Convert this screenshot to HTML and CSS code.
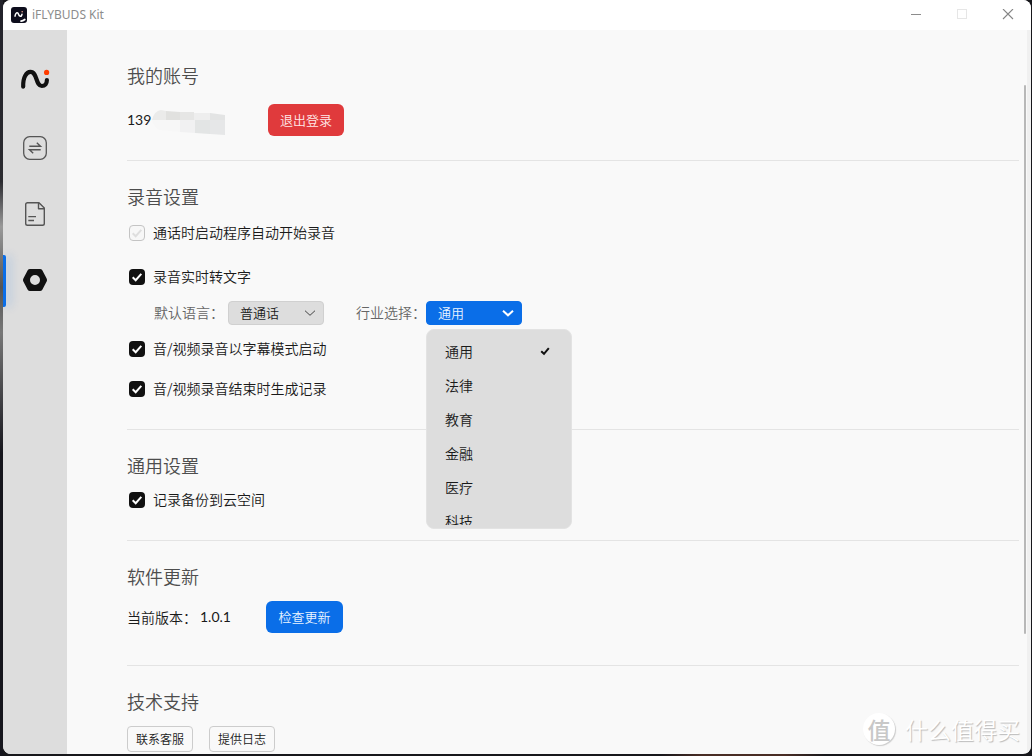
FILE: index.html
```html
<!DOCTYPE html>
<html lang="zh-CN">
<head>
<meta charset="utf-8">
<meta name="viewport" content="width=device-width, initial-scale=1">
<title>iFLYBUDS Kit</title>
<link rel="stylesheet" href="styles.css">
</head>
<body class="desktop">
<div class="window">
  <header class="titlebar">
    <svg class="app-icon" viewBox="0 0 16 16" aria-hidden="true">
      <rect width="16" height="16" rx="3" fill="#0d0d1c"/>
      <path d="M4 9.2C4.5 5.5 6.5 4.6 7.4 7C8.200 9.500 10.500 10.500 11 7.200" fill="none" stroke="#fff" stroke-width="1.500" stroke-linecap="round"/>
      <circle cx="11.200" cy="4.800" r="0.800" fill="#e8a090"/>
      <path d="M10 14.200Q12 14 13.800 12.500" fill="none" stroke="#fff" stroke-width="1.700" stroke-linecap="round"/>
    </svg>
    <h1 class="app-name">iFLYBUDS Kit</h1>
    <div class="window-controls">
      <button class="control" aria-label="最小化"><svg viewBox="0 0 12 12"><path d="M1 5.500H11" stroke="#8c8c8c"/></svg></button>
      <button class="control" aria-label="最大化" disabled><svg viewBox="0 0 12 12"><rect x="1.500" y="0.500" width="9" height="9" fill="none" stroke="#e6e6e6"/></svg></button>
      <button class="control" aria-label="关闭"><svg viewBox="0 0 12 12"><path d="M1 0L11 10M11 0L1 10" stroke="#858585" stroke-width="1.100"/></svg></button>
    </div>
  </header>
  <div class="body">
    <nav class="sidebar" aria-label="主导航">
      <svg class="logo" viewBox="20 64 30 30" aria-hidden="true">
        <path d="M23.200 86.700C22.800 77 26.500 71.900 30.400 71.900C37.500 71.900 35.500 86 41.800 86C45 86 46.900 83.500 46.900 80" fill="none" stroke="#111" stroke-width="4.200" stroke-linecap="round"/>
        <circle cx="46.600" cy="72.400" r="2.600" fill="#ff3d00"/>
      </svg>
      <button class="nav-item" aria-label="传输">
        <svg viewBox="0 0 24 24" fill="none" stroke="#555" stroke-width="1.300"><rect x="0.700" y="0.700" width="22.600" height="22.600" rx="6"/><path d="M6.300 10.200H17.500L13.800 6.800M17.700 13.800H6.500L10.200 17.200" stroke-width="1.400"/></svg>
      </button>
      <button class="nav-item" aria-label="记录">
        <svg viewBox="0 0 24 24" fill="none" stroke="#555" stroke-width="1.400" stroke-linejoin="round"><path d="M4 0.700H16L21.300 6V21.500Q21.300 23.300 19.500 23.300H4.500Q2.700 23.300 2.700 21.500V2.500Q2.700 0.700 4.500 0.700M15.500 0.700V6.800H21.300"/><path d="M5.300 14.600H13M5.300 18.500H11"/></svg>
      </button>
      <button class="nav-item active" aria-label="设置" aria-current="page">
        <svg viewBox="0 0 24 24"><path fill="#111" fill-rule="evenodd" d="M7 1H17Q18.500 1 19.300 2.300L23.500 10.200Q24.500 12 23.500 13.800L19.300 21.700Q18.500 23 17 23H7Q5.500 23 4.700 21.700L0.500 13.800Q-0.500 12 0.500 10.200L4.700 2.300Q5.500 1 7 1ZM12 7A5 5 0 1 0 12 17A5 5 0 1 0 12 7Z"/></svg>
      </button>
    </nav>
    <main class="content">
      <section class="section account">
        <h2 class="heading">我的账号</h2>
        <div class="row account-row">
          <span class="phone"><span class="digits">139</span><svg class="mask" viewBox="0 0 74 26" aria-hidden="true"><path d="M0 10Q2 1 9 0L14 1V10Z" fill="#ebebea"/><path d="M14 1L28 2V10H14Z" fill="#e1e1df"/><path d="M28 2H42V10H28Z" fill="#e6e6e5"/><path d="M42 3H58V10H42Z" fill="#eee"/><path d="M58 3L73 5V10H58Z" fill="#e3e4e4"/><path d="M0 10H28V22L8 20Q2 18 0 10Z" fill="#f7f7f7"/><path d="M28 10H43V23L28 22Z" fill="#f1f1f2"/><path d="M43 10H58V24L43 23Z" fill="#e3e5e5"/><path d="M58 10H73V25L58 24Z" fill="#e6e7e8"/></svg></span>
          <button class="button danger">退出登录</button>
        </div>
      </section>

      <section class="section recording">
        <h2 class="heading">录音设置</h2>
        <label class="check"><input type="checkbox" checked disabled><svg viewBox="0 0 16 16"><path d="M3.700 8.200L6.700 11.200L12.300 4.900"/></svg><span>通话时启动程序自动开始录音</span></label>
        <label class="check spaced-wide"><input type="checkbox" checked><svg viewBox="0 0 16 16"><path d="M3.700 8.200L6.700 11.200L12.300 4.900"/></svg><span>录音实时转文字</span></label>
        <div class="row options">
          <div class="field">
            <label for="language">默认语言：</label>
            <span class="select-box">
              <select class="select" id="language"><option>普通话</option></select>
              <svg class="chevron" viewBox="0 0 12 12"><path d="M1 3.700L6 8.300L11 3.700"/></svg>
            </span>
          </div>
          <div class="field">
            <label for="industry">行业选择：</label>
            <span class="select-box open">
              <select class="select" id="industry"><option>通用</option><option>法律</option><option>教育</option><option>金融</option><option>医疗</option><option>科技</option></select>
              <svg class="chevron" viewBox="0 0 12 12"><path d="M1 3.700L6 8.300L11 3.700"/></svg>
              <span class="menu"><span class="menu-list" role="listbox" aria-label="行业选择">
                <span class="menu-item" role="option" aria-selected="true">通用<svg class="tick" viewBox="0 0 10 10"><path d="M1.200 5.200L4 7.800L8.800 2.200"/></svg></span>
                <span class="menu-item" role="option">法律</span>
                <span class="menu-item" role="option">教育</span>
                <span class="menu-item" role="option">金融</span>
                <span class="menu-item" role="option">医疗</span>
                <span class="menu-item" role="option">科技</span>
              </span></span>
            </span>
          </div>
        </div>
        <label class="check"><input type="checkbox" checked><svg viewBox="0 0 16 16"><path d="M3.700 8.200L6.700 11.200L12.300 4.900"/></svg><span>音/视频录音以字幕模式启动</span></label>
        <label class="check spaced"><input type="checkbox" checked><svg viewBox="0 0 16 16"><path d="M3.700 8.200L6.700 11.200L12.300 4.900"/></svg><span>音/视频录音结束时生成记录</span></label>
      </section>

      <section class="section general">
        <h2 class="heading">通用设置</h2>
        <label class="check"><input type="checkbox" checked><svg viewBox="0 0 16 16"><path d="M3.700 8.200L6.700 11.200L12.300 4.900"/></svg><span>记录备份到云空间</span></label>
      </section>

      <section class="section update">
        <h2 class="heading">软件更新</h2>
        <div class="row version-row">
          <span class="version-label">当前版本：</span><span class="version digits">1.0.1</span>
          <button class="button primary">检查更新</button>
        </div>
      </section>

      <section class="section support">
        <h2 class="heading">技术支持</h2>
        <div class="row support-row">
          <button class="button outline">联系客服</button>
          <button class="button outline">提供日志</button>
        </div>
      </section>
    </main>
    <div class="scroll-track" aria-hidden="true"><div class="scroll-thumb"></div></div>
  </div>
</div>
<div class="watermark"><span class="watermark-badge">值</span><span>什么值得买</span></div>
</body>
</html>
```

FILE: styles.css
```css
* {
  box-sizing: border-box;
}

.desktop {
  height: 100vh;
  margin: 0;
  padding: 0 1px 2px 3px;
  overflow: hidden;
  background:
    linear-gradient(#22222a 0%, #2b2b30 24%, #999 30%, #555 38%, #777 44%, #15151c 60%) left / 3px 100% no-repeat,
    linear-gradient(90deg, #17171b 0%, #17171b 64%, #4a2d25 68%, #4a2d25 76%, #17171b 80%);
  color: #1a1a1a;
  font-family: "Noto Sans CJK SC", sans-serif;
  font-size: 14px;
  font-weight: 350;
  line-height: 24px;
}

button,
select,
input {
  margin: 0;
  padding: 0;
  border: 0;
  background: none;
  color: inherit;
  font: inherit;
}

svg {
  display: block;
}

.window {
  display: flex;
  flex-direction: column;
  height: 100%;
  overflow: hidden;
  border-radius: 8px;
  background: #f9f9f9;
}

.titlebar {
  display: flex;
  flex: none;
  align-items: center;
  height: 30px;
  padding-left: 8px;
  background: #fff;
}

.app-icon {
  width: 16px;
  height: 16px;
}

.app-name {
  margin: 0 auto 0 5px;
  color: #8c8c8c;
  font-family: "Noto Sans", sans-serif;
  font-size: 12px;
  font-weight: 400;
}

.window-controls {
  display: flex;
}

.control {
  display: grid;
  place-items: center;
  width: 46px;
  height: 30px;
}

.control svg {
  width: 12px;
  height: 12px;
}

.body {
  display: flex;
  flex: 1;
  min-height: 0;
}

.sidebar {
  display: flex;
  flex: none;
  flex-direction: column;
  align-items: center;
  gap: 42px;
  width: 64px;
  padding-top: 34px;
  background: #ddd;
}

.logo {
  width: 30px;
  height: 30px;
}

.nav-item {
  position: relative;
  display: grid;
  place-items: center;
  width: 100%;
  height: 24px;
}

.nav-item svg {
  width: 24px;
  height: 24px;
}

.nav-item.active::before {
  content: "";
  position: absolute;
  top: -13px;
  left: 0;
  width: 3px;
  height: 52px;
  border-radius: 0 2px 2px 0;
  background: #0a6ee8;
  box-shadow: 4px 0 10px rgba(10, 110, 232, 0.3);
}

.content {
  flex: 1;
  min-width: 0;
  padding: 10px 5px 0 60px;
  overflow: hidden;
}

.section {
  padding-top: 24px;
  border-bottom: 1px solid #e4e4e4;
}

.account {
  padding-bottom: 24px;
}

.recording,
.general {
  padding-bottom: 28px;
}

.update {
  padding-bottom: 32px;
}

.support {
  border-bottom: 0;
}

.heading {
  margin: 0 0 14px;
  color: #4d4d4d;
  font-size: 18px;
  font-weight: 350;
  line-height: 22px;
}

.account .heading {
  margin-bottom: 18px;
}

.general .heading {
  margin-bottom: 12px;
}

.row {
  display: flex;
  align-items: center;
}

.digits {
  font-family: Lato, sans-serif;
  font-weight: 400;
}

.phone {
  display: flex;
  align-items: center;
  width: 141px;
}

.mask {
  width: 74px;
  height: 26px;
  margin: 5px 0 0 1px;
}

.button {
  height: 32px;
  border-radius: 6px;
  font-size: 13px;
  line-height: 20px;
}

.danger {
  width: 76px;
  background: #e03a3c;
  color: #ffe9e9;
}

.primary {
  width: 77px;
  background: #0a6ee8;
  color: #e9f3ff;
}

.outline {
  width: 66px;
  height: 26px;
  border: 1px solid #ccc;
  border-radius: 4px;
  font-size: 12px;
}

.check {
  display: grid;
  grid-template-columns: 16px auto;
  align-items: center;
  justify-content: start;
  column-gap: 8px;
  padding-left: 2px;
}

.check span {
  padding-bottom: 2px;
  line-height: 22px;
}

.check input {
  grid-area: 1 / 1;
  width: 16px;
  height: 16px;
  border-radius: 4px;
  background: #111;
  appearance: none;
}

.check svg {
  grid-area: 1 / 1;
  width: 16px;
  height: 16px;
  fill: none;
  stroke: #fff;
  stroke-width: 2;
  pointer-events: none;
}

.check input:disabled {
  border: 1px solid #c4c4c4;
  background: #f7f7f7;
}

.check input:disabled + svg {
  stroke: #dedede;
}

.spaced {
  margin-top: 16px;
}

.spaced-wide {
  margin-top: 20px;
}

.options {
  gap: 32px;
  padding: 12px 0 12px 27px;
}

.field {
  display: flex;
  align-items: center;
  color: #666;
}

.field > label {
  width: 74px;
  padding-bottom: 2px;
  line-height: 22px;
  white-space: nowrap;
}

.field + .field > label {
  width: 70px;
}

.select-box {
  position: relative;
  display: grid;
  align-items: center;
  width: 96px;
  height: 24px;
}

.select {
  grid-area: 1 / 1;
  width: 100%;
  height: 24px;
  padding-left: 11px;
  border: 1px solid #d0d0d0;
  border-radius: 4px;
  background: #ddd;
  color: #1a1a1a;
  font-size: 13px;
  line-height: 22px;
  appearance: none;
}

.open .select {
  border-color: #0a6ee8;
  background: #0a6ee8;
  color: #e9f3ff;
}

.chevron {
  grid-area: 1 / 1;
  justify-self: end;
  width: 12px;
  height: 12px;
  margin-right: 8px;
  fill: none;
  stroke: #444;
  stroke-width: 1;
  pointer-events: none;
}

.open .chevron {
  stroke: #fff;
  stroke-width: 2;
}

.menu {
  position: absolute;
  top: 28px;
  left: 0;
  z-index: 1;
  width: 146px;
  padding: 4px 0 3px;
  border: 1px solid #e3e3e3;
  border-radius: 8px;
  background: #ddd;
  color: #1a1a1a;
}

.menu-list {
  display: block;
  height: 191px;
  overflow: hidden;
}

.menu-item {
  display: flex;
  align-items: center;
  justify-content: space-between;
  height: 34px;
  padding: 0 21px 0 18px;
}

.tick {
  width: 10px;
  height: 10px;
  fill: none;
  stroke: #111;
  stroke-width: 2;
}

.version-label {
  width: 73px;
}

.version {
  width: 66px;
}

.support-row {
  gap: 16px;
}

.scroll-track {
  flex: none;
  width: 7px;
  padding-top: 55px;
  border-right: 4px solid #f0f0f0;
}

.scroll-thumb {
  width: 2px;
  height: 82%;
  border-radius: 1px;
  background: #b8b8b8;
}

.watermark {
  position: absolute;
  right: 12px;
  bottom: 11px;
  display: flex;
  align-items: center;
  gap: 10px;
  color: #fff;
  font-size: 23px;
  line-height: 32px;
  text-shadow: 1px 1px 1px #bbb;
}

.watermark-badge {
  width: 32px;
  height: 32px;
  border-radius: 50%;
  background: #fff;
  box-shadow: 1px 1px 1px #ccc;
  color: #c8c8c8;
  font-weight: 500;
  text-align: center;
  text-shadow: none;
}
```
